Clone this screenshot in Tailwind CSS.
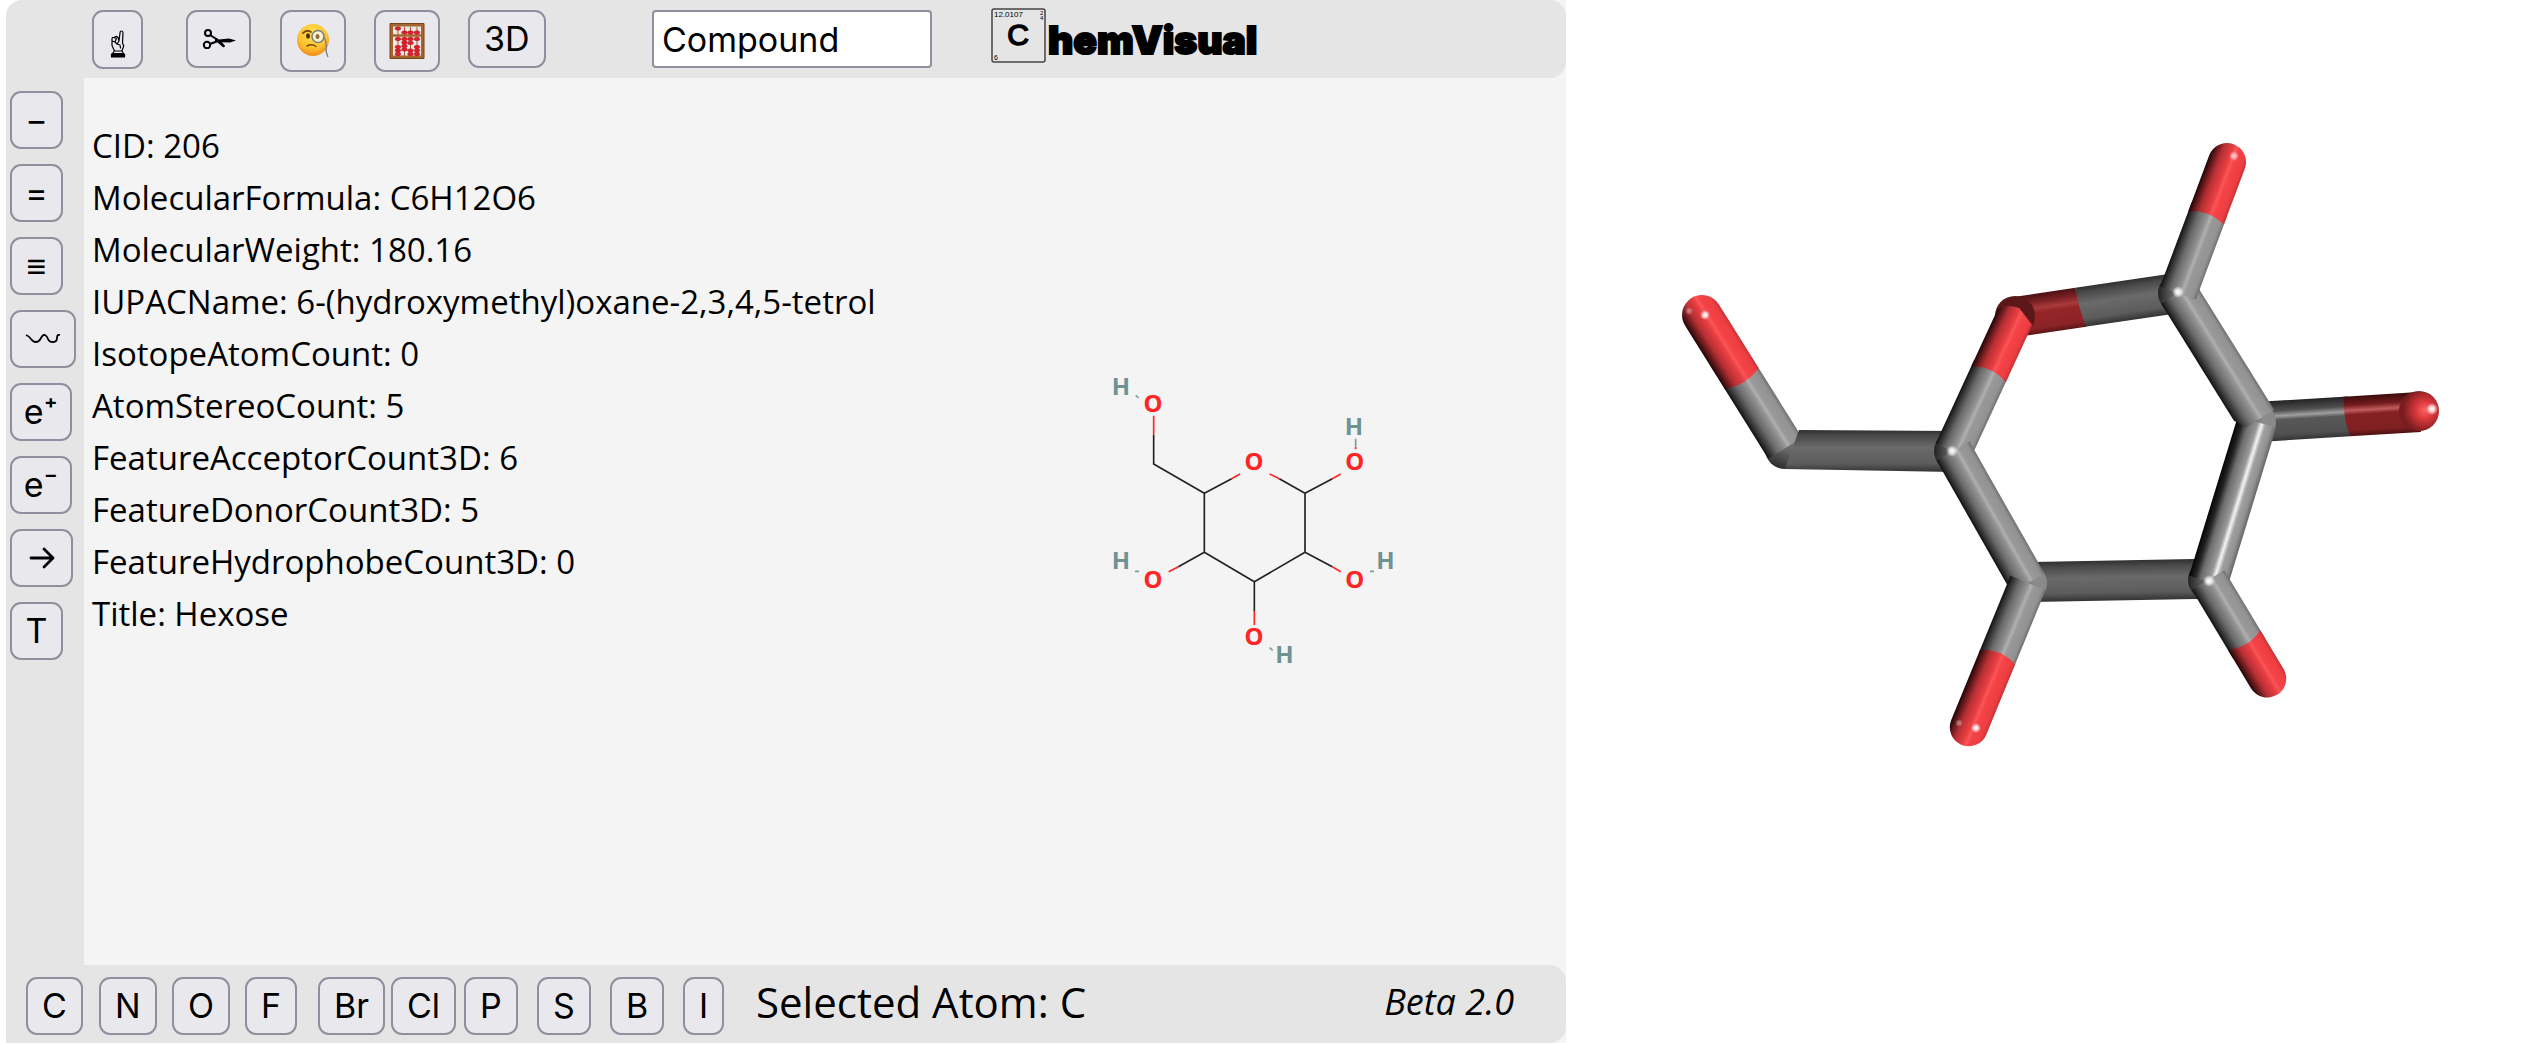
<!DOCTYPE html>
<html lang="en">
<head>
<meta charset="utf-8">
<title>ChemVisual</title>
<script src="https://cdn.jsdelivr.net/npm/@tailwindcss/browser@4"></script>
</head>
<body class="bg-white text-black font-['Open_Sans',sans-serif]">
<div class="grid min-h-screen grid-cols-[1560fr_974fr] pb-px pl-1.5">

  <div class="flex flex-col rounded-tl-2xl bg-[#f4f4f4]">
    <header class="flex h-[78px] items-start rounded-tl-2xl rounded-r-2xl bg-[#e5e5e5] pl-[86px] pt-2.5 font-['Inter',sans-serif] text-[34px] leading-none">
      <div class="grid grid-cols-[repeat(5,94px)] items-start justify-items-start">
        <button type="button" aria-label="Select" class="flex h-[59px] w-[51px] items-center justify-center rounded-[11px] border-2 border-[#8f8f9d] bg-[#e9e9ed] pt-2">
          <svg class="h-7 w-4" viewBox="0 0 16 28" fill="none" stroke="#000" stroke-width="1.2" stroke-linejoin="round" stroke-linecap="round">
            <path d="M9 11 10 3q0-2 1.500-2T13 3l-.5 10 1.300 3-2 5H4.500L2 15.500V9q0-2 1.500-1.500L5 8V7q1.500-1.500 3 .5L9 11M2 11l3 1 1.500-4M5 12l2 2 2-3M7 14l3 1 .5 3M4 21.500l-1.500 2H13.500L12 21"/>
            <path d="M1.500 24h13v3h-13z" fill="#000"/>
          </svg>
        </button>
        <button type="button" aria-label="Cut" class="flex h-[58px] w-[65px] items-center justify-center rounded-[11px] border-2 border-[#8f8f9d] bg-[#e9e9ed]">
          <svg class="h-5 w-[34px]" viewBox="0 0 34 20">
            <g fill="none" stroke="#000" stroke-width="2"><circle cx="6" cy="4" r="3"/><circle cx="5" cy="16" r="3.200"/><path d="m8 6 8 5M8 15l8-3"/></g>
            <path d="m13 9 4 1.500 10-1 7 2-6 2-8-.2 3 3.500q0 1.500-2 1.500L15 13l-2-.5z"/>
          </svg>
        </button>
        <button type="button" aria-label="Inspect" class="flex h-[62px] w-[66px] items-center justify-center rounded-[11px] border-2 border-[#8f8f9d] bg-[#e9e9ed]">
          <svg class="h-9 w-9" viewBox="0 0 36 36">
            <defs><radialGradient id="face" cx=".5" cy=".3" r=".7"><stop offset="0" stop-color="#ffe34e"/><stop offset=".65" stop-color="#fdc130"/><stop offset="1" stop-color="#ee8d1c"/></radialGradient></defs>
            <circle cx="18" cy="17" r="16" fill="url(#face)"/>
            <path d="M8 10q4-4 8-1" fill="none" stroke="#7a4310" stroke-width="1.800" stroke-linecap="round"/>
            <ellipse cx="13" cy="13" rx="2" ry="2.800" fill="#5a300b"/>
            <circle cx="23" cy="13.500" r="6" fill="#fff" fill-opacity=".7" stroke="#77808a" stroke-width="1.600"/>
            <ellipse cx="22.500" cy="13.500" rx="2" ry="2.600" fill="#8a6a3d"/>
            <path d="M12 23q5-2.500 9 .5" fill="none" stroke="#7a4310" stroke-width="1.500" stroke-linecap="round"/>
            <path d="M29 14q3 5 2 12 0 4 2 8" fill="none" stroke="#77808a" stroke-width="1.400"/>
          </svg>
        </button>
        <button type="button" aria-label="Calculate" class="flex h-[62px] w-[66px] items-center justify-center rounded-[11px] border-2 border-[#8f8f9d] bg-[#e9e9ed]">
          <svg class="h-9 w-9" viewBox="0 0 36 36">
            <rect x="2.500" y="2" width="31" height="32" fill="#ece7e3" stroke="#a5662e" stroke-width="3"/>
            <path d="M1 .5h34v35H1z" fill="none" stroke="#784316"/>
            <path d="M9 4v29M15.500 4v29M21.500 4v29M28 4v29" stroke="#a55a35"/>
            <path d="M3 12.500h30" stroke="#a5662e" stroke-width="2.500"/>
            <g fill="#e1202c" stroke="#9c101c" stroke-width=".5">
              <ellipse cx="9" cy="5.500" rx="2.900" ry="1.700"/><ellipse cx="15.500" cy="9.500" rx="2.900" ry="1.700"/><ellipse cx="21.500" cy="9.500" rx="2.900" ry="1.700"/><ellipse cx="28" cy="9.500" rx="2.900" ry="1.700"/>
              <ellipse cx="9" cy="16" rx="2.900" ry="1.700"/><ellipse cx="9" cy="24" rx="2.900" ry="1.700"/><ellipse cx="9" cy="27.500" rx="2.900" ry="1.700"/><ellipse cx="9" cy="31" rx="2.900" ry="1.700"/>
              <ellipse cx="15.500" cy="16" rx="2.900" ry="1.700"/><ellipse cx="15.500" cy="19.500" rx="2.900" ry="1.700"/><ellipse cx="15.500" cy="23" rx="2.900" ry="1.700"/><ellipse cx="15.500" cy="26.500" rx="2.900" ry="1.700"/>
              <ellipse cx="21.500" cy="16" rx="2.900" ry="1.700"/><ellipse cx="21.500" cy="20" rx="2.900" ry="1.700"/><ellipse cx="21.500" cy="27.500" rx="2.900" ry="1.700"/><ellipse cx="21.500" cy="31" rx="2.900" ry="1.700"/>
              <ellipse cx="28" cy="16" rx="2.900" ry="1.700"/><ellipse cx="28" cy="24" rx="2.900" ry="1.700"/><ellipse cx="28" cy="27.500" rx="2.900" ry="1.700"/><ellipse cx="28" cy="31" rx="2.900" ry="1.700"/>
            </g>
          </svg>
        </button>
        <button type="button" class="h-[58px] rounded-[11px] border-2 border-[#8f8f9d] bg-[#e9e9ed] px-3.5">3D</button>
      </div>
      <input type="text" aria-label="Compound" value="Compound" class="ml-[90px] h-[58px] w-[280px] rounded border-2 border-[#8f8f9d] bg-white px-2">
      <a href="#" aria-label="ChemVisual" class="-mt-0.5 ml-[59px] flex items-center gap-0.5">
        <svg class="h-[55px] w-[55px]" viewBox="0 0 55 55" font-family="Liberation Sans, sans-serif">
          <rect x="1" y="1" width="53" height="53" rx="2" fill="none" stroke="#444" stroke-width="1.500"/>
          <text x="3" y="9" font-size="8">12.0107</text>
          <text x="27" y="37" font-size="30" text-anchor="middle" stroke="#000" stroke-width="1.500">C</text>
          <text x="49" y="7" font-size="6">2</text><text x="49" y="12" font-size="6">4</text>
          <text x="3" y="52" font-size="7">6</text>
        </svg>
        <span class="pt-2 text-[39px] font-black [-webkit-text-stroke:2px_black]">hemVisual</span>
      </a>
    </header>

    <div class="flex flex-1">
      <nav aria-label="Bonds" class="flex w-[78px] flex-col items-start gap-[15px] bg-[#e5e5e5] pl-1 pt-[13px] font-['Inter',sans-serif] text-[34px] leading-none">
        <button type="button" class="h-[58px] w-[53px] rounded-[11px] border-2 border-[#8f8f9d] bg-[#e9e9ed]">−</button>
        <button type="button" class="h-[58px] w-[53px] rounded-[11px] border-2 border-[#8f8f9d] bg-[#e9e9ed]">=</button>
        <button type="button" class="h-[58px] w-[53px] rounded-[11px] border-2 border-[#8f8f9d] bg-[#e9e9ed]">≡</button>
        <button type="button" aria-label="Wavy bond" class="flex h-[58px] w-[66px] items-center justify-center rounded-[11px] border-2 border-[#8f8f9d] bg-[#e9e9ed]">
          <svg class="h-2.5 w-9" viewBox="0 0 36 10"><path d="M1 1q3 1 5 4t5 3 5-4 4-3 3 4 5 3 4-4 3-3" fill="none" stroke="#000" stroke-width="1.800"/></svg>
        </button>
        <button type="button" class="h-[58px] w-[62px] rounded-[11px] border-2 border-[#8f8f9d] bg-[#e9e9ed]">e⁺</button>
        <button type="button" class="h-[58px] w-[62px] rounded-[11px] border-2 border-[#8f8f9d] bg-[#e9e9ed]">e⁻</button>
        <button type="button" aria-label="Arrow" class="flex h-[58px] w-[63px] items-center justify-center rounded-[11px] border-2 border-[#8f8f9d] bg-[#e9e9ed]">
          <svg class="h-6 w-[26px]" viewBox="0 0 26 24" fill="none" stroke="#000" stroke-width="2.800" stroke-linecap="round" stroke-linejoin="round"><path d="M2 12h22M15 3l9 9-9 9"/></svg>
        </button>
        <button type="button" class="h-[58px] w-[53px] rounded-[11px] border-2 border-[#8f8f9d] bg-[#e9e9ed]">T</button>
      </nav>

      <main class="flex flex-1 items-start justify-between pl-2">
        <ul class="pt-[42px] text-[33px] leading-[52px]">
          <li>CID: 206</li>
          <li>MolecularFormula: C6H12O6</li>
          <li>MolecularWeight: 180.16</li>
          <li>IUPACName: 6-(hydroxymethyl)oxane-2,3,4,5-tetrol</li>
          <li>IsotopeAtomCount: 0</li>
          <li>AtomStereoCount: 5</li>
          <li>FeatureAcceptorCount3D: 6</li>
          <li>FeatureDonorCount3D: 5</li>
          <li>FeatureHydrophobeCount3D: 0</li>
          <li>Title: Hexose</li>
        </ul>
        <svg class="mr-[146px] mt-[272px] h-[330px] w-[340px]" viewBox="0 0 1020 990" role="img" aria-label="Hexose structure" font-family="Noto Sans, sans-serif" font-weight="700" font-size="72" text-anchor="middle">
          <g fill="none" stroke="#222" stroke-width="5">
            <path d="M221 255v87l152 88M455 386l-82 44v177l150 88 152-88V430l-77-44M675 430l82-44M373 607l-78 43M675 607l82 43M523 695v88"/>
          </g>
          <g stroke="#ff2525" stroke-width="5">
            <path d="M221 197v58M455 386l25-14M598 386l-29-14M757 386l25-14M295 650l-29 15M757 650l25 15M523 783v42M827 290v8"/>
          </g>
          <g stroke="#7f9c9c" stroke-width="5"><path d="M827 266v24M167 136l9 8M165 664h12M870 664h12M569 893l9 8"/></g>
          <g fill="#ff2525">
            <text x="219" y="187">O</text><text x="522" y="359">O</text><text x="824" y="359">O</text>
            <text x="219" y="714">O</text><text x="824" y="714">O</text><text x="522" y="886">O</text>
          </g>
          <g fill="#6f9292">
            <text x="123" y="135">H</text><text x="822" y="254">H</text><text x="123" y="656">H</text>
            <text x="916" y="656">H</text><text x="613" y="938">H</text>
          </g>
        </svg>
      </main>
    </div>

    <footer class="flex h-[78px] items-center rounded-r-2xl bg-[#e5e5e5] pl-5 pr-[52px]">
      <div class="grid grid-cols-[repeat(10,73px)] justify-items-start pt-1 font-['Inter',sans-serif] text-[34px] leading-none">
        <button type="button" class="h-[58px] rounded-[11px] border-2 border-[#8f8f9d] bg-[#e9e9ed] px-3.5">C</button>
        <button type="button" class="h-[58px] rounded-[11px] border-2 border-[#8f8f9d] bg-[#e9e9ed] px-3.5">N</button>
        <button type="button" class="h-[58px] rounded-[11px] border-2 border-[#8f8f9d] bg-[#e9e9ed] px-3.5">O</button>
        <button type="button" class="h-[58px] rounded-[11px] border-2 border-[#8f8f9d] bg-[#e9e9ed] px-3.5">F</button>
        <button type="button" class="h-[58px] rounded-[11px] border-2 border-[#8f8f9d] bg-[#e9e9ed] px-3.5">Br</button>
        <button type="button" class="h-[58px] rounded-[11px] border-2 border-[#8f8f9d] bg-[#e9e9ed] px-3.5">Cl</button>
        <button type="button" class="h-[58px] rounded-[11px] border-2 border-[#8f8f9d] bg-[#e9e9ed] px-3.5">P</button>
        <button type="button" class="h-[58px] rounded-[11px] border-2 border-[#8f8f9d] bg-[#e9e9ed] px-3.5">S</button>
        <button type="button" class="h-[58px] rounded-[11px] border-2 border-[#8f8f9d] bg-[#e9e9ed] px-3.5">B</button>
        <button type="button" class="h-[58px] rounded-[11px] border-2 border-[#8f8f9d] bg-[#e9e9ed] px-3.5">I</button>
      </div>
      <p class="pb-1 text-[42px] leading-none">Selected Atom: C</p>
      <p class="ml-auto pb-1 text-4xl leading-none italic">Beta 2.0</p>
    </footer>
  </div>

  <section aria-label="3D view" class="flex items-start">
    <svg class="w-full" viewBox="1566 0 974 1043" role="img" aria-label="3D stick model of hexose">
      <defs>
        <linearGradient id="gs" x2="0" y2="1"><stop offset="0" stop-color="#707070"/><stop offset=".1" stop-color="#929292"/><stop offset=".32" stop-color="#999"/><stop offset=".4" stop-color="#b0b0b0"/><stop offset=".48" stop-color="#949494"/><stop offset=".72" stop-color="#6a6a6a"/><stop offset=".92" stop-color="#2c2c2c"/><stop offset="1" stop-color="#101010"/></linearGradient>
        <linearGradient id="gb" x2="0" y2="1"><stop offset="0" stop-color="#666"/><stop offset=".12" stop-color="#929292"/><stop offset=".27" stop-color="#a0a0a0"/><stop offset=".37" stop-color="#f4f4f4"/><stop offset=".47" stop-color="#999"/><stop offset=".7" stop-color="#6d6d6d"/><stop offset=".85" stop-color="#222"/><stop offset="1" stop-color="#050505"/></linearGradient>
        <linearGradient id="gh" x2="0" y2="1"><stop offset="0" stop-color="#303030"/><stop offset=".15" stop-color="#4b4b4b"/><stop offset=".42" stop-color="#6a6a6a"/><stop offset=".8" stop-color="#5c5c5c"/><stop offset="1" stop-color="#333"/></linearGradient>
        <linearGradient id="gr" x2="0" y2="1"><stop offset="0" stop-color="#222"/><stop offset=".25" stop-color="#505050"/><stop offset=".38" stop-color="#a0a0a0"/><stop offset=".48" stop-color="#585858"/><stop offset=".85" stop-color="#505050"/><stop offset="1" stop-color="#333"/></linearGradient>
        <linearGradient id="rs" x2="0" y2="1"><stop offset="0" stop-color="#c93236"/><stop offset=".1" stop-color="#ec3e41"/><stop offset=".32" stop-color="#f54347"/><stop offset=".4" stop-color="#fa5558"/><stop offset=".48" stop-color="#ea3f43"/><stop offset=".72" stop-color="#b52f33"/><stop offset=".92" stop-color="#4c1214"/><stop offset="1" stop-color="#200506"/></linearGradient>
        <linearGradient id="rh" x2="0" y2="1"><stop offset="0" stop-color="#4c1214"/><stop offset=".2" stop-color="#7d2123"/><stop offset=".36" stop-color="#a83a3c"/><stop offset=".48" stop-color="#932528"/><stop offset=".85" stop-color="#8c2326"/><stop offset="1" stop-color="#5c1517"/></linearGradient>
        <linearGradient id="rr" x2="0" y2="1"><stop offset="0" stop-color="#3c0c0e"/><stop offset=".22" stop-color="#741b1d"/><stop offset=".36" stop-color="#c05c5e"/><stop offset=".46" stop-color="#852022"/><stop offset=".85" stop-color="#802022"/><stop offset="1" stop-color="#4b1113"/></linearGradient>
        <linearGradient id="js"><stop offset="0" stop-color="#222"/><stop offset=".35" stop-color="#5e5e5e"/><stop offset=".65" stop-color="#8c8c8c"/><stop offset="1" stop-color="#888"/></linearGradient>
        <linearGradient id="jb" x1=".2" y1="1" x2=".7" y2="0"><stop offset="0" stop-color="#222"/><stop offset=".5" stop-color="#666"/><stop offset="1" stop-color="#888"/></linearGradient>
        <radialGradient id="cap" cx=".65" cy=".48" r=".55"><stop offset="0" stop-color="#f86468"/><stop offset=".4" stop-color="#dc383c"/><stop offset="1" stop-color="#7a1c1f"/></radialGradient>
        <radialGradient id="spot"><stop offset="0" stop-color="#fff"/><stop offset=".4" stop-color="#fff" stop-opacity=".8"/><stop offset="1" stop-color="#fff" stop-opacity="0"/></radialGradient>
        <clipPath id="view"><path d="M1566 143h873v700h-873z"/></clipPath>
      </defs>
      <g clip-path="url(#view)">
        <circle cx="1785" cy="449" r="20" fill="url(#jb)"/>
        <g transform="translate(1702 315) rotate(58)"><path d="M74-20h83v40H74z" fill="url(#gs)"/><path d="M0-20h75q8 20 0 40H0a20 20 0 0 1 0-40z" fill="url(#rs)"/></g>
        <path d="M1799 430 1954 431v41l-169-3z" fill="url(#gh)"/>
        <g transform="translate(2028 582) rotate(-1)"><path d="M0-20h180v40H0z" fill="url(#gh)"/></g>
        <g transform="translate(2015 317) rotate(-8.400)"><path d="M64-20h101v40H68q-6-20-4-40z" fill="url(#gh)"/><path d="M0-20h64q0 20 5 40H0z" fill="url(#rh)"/></g>
        <g transform="translate(2257 422) rotate(-3.500)"><path d="M0-20h92v40H0z" fill="url(#gr)"/><path d="M88-20h75v40H92q-6-20-4-40z" fill="url(#rr)"/></g>
        <circle cx="2419" cy="411" r="20" fill="url(#cap)"/>

        <circle cx="1954" cy="451" r="20" fill="url(#js)"/>
        <circle cx="2178" cy="293" r="20" fill="url(#js)"/>
        <circle cx="2257" cy="422" r="19" fill="url(#js)"/>
        <circle cx="2208" cy="580" r="20" fill="url(#js)"/>
        <circle cx="2028" cy="583" r="19" fill="url(#js)"/>
        <circle cx="2015" cy="316" r="20" fill="#5c1719"/>

        <g transform="translate(2015 317) rotate(114.800)"><path d="M56-19h92v38H56z" fill="url(#gs)"/><path d="M0-19h63q-9 19 0 38H0q-9-6-10-19z" fill="url(#rs)"/></g>
        <g transform="translate(1953 451) rotate(60.400)"><path d="M0-19h152v38H0z" fill="url(#gs)"/></g>
        <g transform="translate(2257 422) rotate(107)"><path d="M0-20h167v40H0z" fill="url(#gb)"/></g>
        <g transform="translate(2178 293) rotate(58.100)"><path d="M0-20h150v33l-12 7H0z" fill="url(#gs)"/></g>
        <g transform="translate(2227 162) rotate(110.500)"><path d="M50-19h90v38H50z" fill="url(#gs)"/><path d="M0-19h60q-9 19 0 38H0a19 19 0 0 1 0-38z" fill="url(#rs)"/></g>
        <g transform="translate(2028 583) rotate(112.300)"><path d="M0-19h82v38H0z" fill="url(#gs)"/><path d="M80-19h76a19 19 0 0 1 0 38H80q-9-19 0-38z" fill="url(#rs)"/></g>
        <g transform="translate(2208 580) rotate(59)"><path d="M0-19h80v38H0z" fill="url(#gs)"/><path d="M70-19h45a19 19 0 0 1 0 38H70q9-19 0-38z" fill="url(#rs)"/></g>

        <circle cx="1705" cy="315" r="5" fill="url(#spot)"/>
        <circle cx="1689" cy="311" r="4" fill="url(#spot)" opacity=".4"/>
        <circle cx="1952" cy="451" r="6" fill="url(#spot)"/>
        <circle cx="2178" cy="292" r="6" fill="url(#spot)"/>
        <circle cx="2234" cy="156" r="5" fill="url(#spot)" opacity=".7"/>
        <circle cx="2432" cy="409" r="6" fill="url(#spot)"/>
        <circle cx="2209" cy="581" r="6" fill="url(#spot)"/>
        <circle cx="1976" cy="728" r="5" fill="url(#spot)"/>
        <circle cx="1959" cy="723" r="4" fill="url(#spot)" opacity=".4"/>
      </g>
    </svg>
  </section>
</div>
</body>
</html>
